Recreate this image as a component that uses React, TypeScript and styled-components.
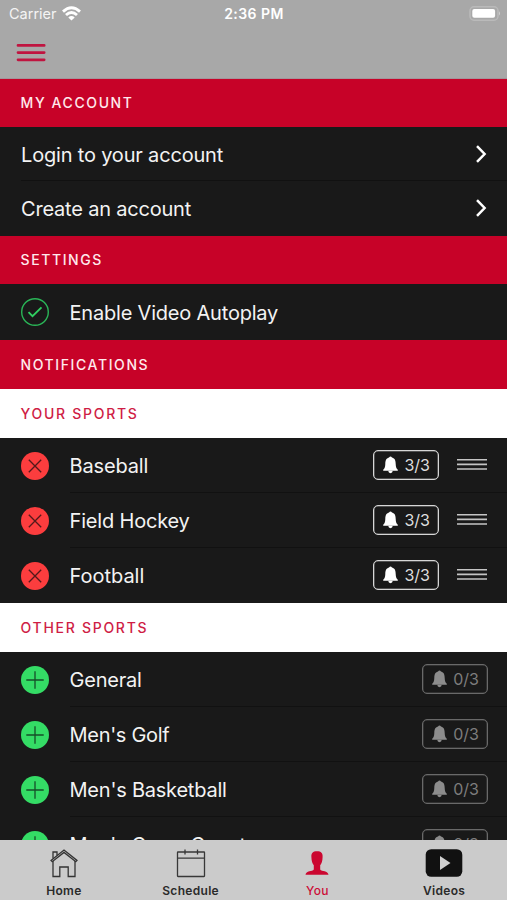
import React from "react";
import styled, { createGlobalStyle } from "styled-components";

const Global = createGlobalStyle`
  * { box-sizing: border-box; }
  body { margin: 0; background: #191919; font-family: Inter, "Liberation Sans", sans-serif; }
`;

const Screen = styled.div`
  display: flex;
  flex-direction: column;
  width: 507px;
  height: 900px;
  overflow: hidden;
  background: #191919;
`;

const Header = styled.header`
  flex: none;
  height: 79px;
  background: #a8a8a8;
  border-bottom: 1px solid #a3949a;
`;

const StatusBar = styled.div`
  display: grid;
  grid-template-columns: 1fr auto 1fr;
  align-items: center;
  height: 27px;
  padding: 0 6px 0 9px;
  color: #fff;
`;

const Carrier = styled.div`
  display: flex;
  align-items: center;
  gap: 5px;
  font-size: 14.5px;
  letter-spacing: 0;
  color: #f4f4f4;
`;

const Clock = styled.div`
  margin-right: 2px;
  font-size: 14px;
  font-weight: 600;
  letter-spacing: 0.45px;
`;

const BatterySlot = styled.div`
  display: flex;
  justify-content: flex-end;
`;

const NavBar = styled.div`
  display: flex;
  align-items: center;
  height: 51px;
  padding-left: 16px;
`;

const Content = styled.main`
  flex: 1;
  min-height: 0;
  overflow: hidden;
`;

const SectionTitle = styled.h2<{ $light?: boolean; $height?: number }>`
  display: flex;
  align-items: center;
  height: ${(p) => p.$height ?? 49}px;
  margin: 0;
  padding: 0 20.5px;
  background: ${(p) => (p.$light ? "#fff" : "#c70228")};
  color: ${(p) => (p.$light ? "#cf1d45" : "#ffe9ec")};
  font-size: 14px;
  font-weight: 500;
  letter-spacing: ${(p) => (p.$light ? 1.72 : 1.6)}px;
`;

const Row = styled.div<{ $height?: number }>`
  display: flex;
  align-items: center;
  height: ${(p) => p.$height ?? 55}px;
  padding-left: 21px;
`;

const RowBody = styled.div<{ $line?: boolean; $drop?: number }>`
  display: flex;
  flex: 1;
  align-items: center;
  justify-content: space-between;
  height: 100%;
  padding: ${(p) => p.$drop ?? 0}px 19px 0 0;
  border-bottom: 1px solid ${(p) => (p.$line ? "#111" : "transparent")};
`;

const Label = styled.span<{ $spacing?: number }>`
  padding-top: 2px;
  color: #f3f3f3;
  font-size: 20px;
  letter-spacing: ${(p) => p.$spacing ?? 0}px;
  white-space: nowrap;
`;

const Marker = styled.div`
  display: flex;
  width: 48.5px;
`;

const Actions = styled.div`
  display: flex;
  align-items: center;
  gap: 18px;
  margin-right: 1px;
`;

const AlertButton = styled.div<{ $off?: boolean }>`
  display: flex;
  align-items: center;
  justify-content: space-between;
  width: 66px;
  height: 30px;
  padding: 0 8px 0 8.5px;
  border: 1px solid ${(p) => (p.$off ? "#696969" : "#d6d6d6")};
  box-shadow: inset 0 0 0 0.5px ${(p) => (p.$off ? "#4a4a4a" : "#888")};
  border-radius: 5px;
  color: ${(p) => (p.$off ? "#7d7d7d" : "#dedede")};
  font-size: 16px;
`;

const TabBar = styled.nav`
  display: grid;
  grid-template-columns: repeat(4, 1fr);
  flex: none;
  height: 60px;
  background: #cbcbcb;
`;

const Tab = styled.div<{ $active?: boolean }>`
  display: flex;
  flex-direction: column;
  align-items: center;
  padding: 7px 0 0 1px;
  color: ${(p) => (p.$active ? "#cc0d38" : "#2a2a2a")};
  font-size: 12px;
  font-weight: ${(p) => (p.$active ? 500 : 600)};
  letter-spacing: 0.3px;
`;

const TabIcon = styled.div`
  display: flex;
  height: 32px;
  margin-bottom: 5px;
`;

const TabLabel = styled.span`
  line-height: 14px;
`;

const Wifi = () => (
  <svg width="19" height="15" viewBox="0 0 19 15" fill="none" stroke="#fff" strokeWidth="2.9">
    <path d="M1 5.6Q9.5-2 18 5.6" />
    <path d="M4 9Q9.5 4 15 9" />
    <path d="M6.3 11.5Q9.5 8.6 12.7 11.5L9.5 14.6Z" fill="#fff" stroke="none" />
  </svg>
);

const Battery = () => (
  <svg width="32" height="15" viewBox="0 0 32 15">
    <rect x="1" y="0.8" width="28" height="13.4" rx="4" fill="none" stroke="#bababa" strokeWidth="1.5" />
    <rect x="3.3" y="3" width="22.8" height="8.8" rx="2" fill="#fff" />
    <path d="M30 5.2q2 2.2 0 4.4z" fill="#d0d0d0" />
  </svg>
);

const MenuIcon = () => (
  <svg width="30" height="19" viewBox="0 0 30 19" stroke="#c01440" strokeWidth="2.7" strokeLinecap="round">
    <path d="M2 2.4H28.2M2 9.6H28.2M2 16.8H28.2" />
  </svg>
);

const Chevron = () => (
  <svg width="13" height="18" viewBox="0 0 13 18" fill="none" stroke="#fff" strokeWidth="2.5">
    <path d="M2 1.2L9.6 9L2 16.8" />
  </svg>
);

const CheckMark = () => (
  <svg width="28" height="28" viewBox="0 0 28 28" fill="none" stroke="#2ab557">
    <circle cx="14" cy="14" r="13.3" strokeWidth="1.4" />
    <path d="M7.5 14.2L11.5 18.2L20.5 9.4" stroke="#30cf60" strokeWidth="1.9" />
  </svg>
);

const RemoveMark = () => (
  <svg width="28" height="28" viewBox="0 0 28 28">
    <circle cx="14" cy="14" r="14" fill="#fc3d3e" />
    <path d="M7.8 7.8L20.2 20.2M20.2 7.8L7.8 20.2" stroke="#52191b" strokeWidth="1.3" />
  </svg>
);

const AddMark = () => (
  <svg width="28" height="28" viewBox="0 0 28 28">
    <circle cx="14" cy="14" r="14" fill="#34dc65" />
    <path d="M5.3 14H22.7M14 5.3V22.7" stroke="#164e28" strokeWidth="1.3" />
  </svg>
);

const Bell = ({ color }: { color: string }) => (
  <svg width="15" height="18" viewBox="0 0 15 18" fill={color}>
    <path d="M6 1.5Q7.5-.5 9 1.5C12 2.3 12.6 4.8 12.7 8C12.8 11.2 13.3 12.4 14.8 13.8V14.8H.2V13.8C1.7 12.4 2.2 11.2 2.3 8C2.4 4.8 3 2.3 6 1.5Z" />
    <path d="M5.2 14.8H9.8Q9.5 17.2 7.5 17.2Q5.5 17.2 5.2 14.8Z" />
  </svg>
);

const DragHandle = () => (
  <svg width="30" height="14" viewBox="0 0 30 14" stroke="#c5c5c5" strokeWidth="1.6">
    <path d="M0 1.8H30M0 6.4H30M0 11H30" />
  </svg>
);

const HomeIcon = () => (
  <svg width="28" height="32" viewBox="0 0 28 32" fill="none" stroke="#333" strokeWidth="1.3">
    <path d="M3 14V29.5H9.8V20H18.2V29.5H25V14" />
    <path d="M1 13.4L14 3L27 13.4L25.8 14.7L14 5.4L2.2 14.7Z" />
    <path d="M3 11.5V5H7V8.3" />
  </svg>
);

const CalendarIcon = () => (
  <svg width="30" height="32" viewBox="0 0 30 32" fill="none" stroke="#383838" strokeWidth="1.3">
    <rect x="1.5" y="5" width="27" height="24.5" rx="0.5" />
    <path d="M1.5 11.2H28.5M9 2.5V7.5M21.5 2.5V7.5" />
  </svg>
);

const PersonIcon = () => (
  <svg width="24" height="32" viewBox="0 0 24 32" fill="#cb0730">
    <path d="M12 4.3C16.2 4.3 17.9 6.2 17.6 10C17.5 14.3 16.7 16.5 15.2 18.3V22.4C16.6 24.8 23 23.2 23.5 27.7H.5C1 23.2 7.4 24.8 8.8 22.4V18.3C7.3 16.5 6.5 14.3 6.4 10C6.1 6.2 7.8 4.3 12 4.3Z" />
  </svg>
);

const VideoIcon = () => (
  <svg width="38" height="32" viewBox="0 0 38 32">
    <rect x="0.7" y="2.2" width="36.6" height="27.6" rx="5.5" fill="#111" />
    <path d="M15 9L25.5 16L15 23Z" fill="#d0d0d0" />
  </svg>
);

const yourSports = [
  { name: "Baseball", spacing: -0.15 },
  { name: "Field Hockey", spacing: -0.18 },
  { name: "Football", spacing: -0.02 },
];

const otherSports = [
  { name: "General", spacing: -0.2 },
  { name: "Men's Golf", spacing: -0.3 },
  { name: "Men's Basketball", spacing: -0.22 },
  { name: "Men's Cross Country", spacing: -0.28 },
];

const tabs = [
  { name: "Home", icon: <HomeIcon /> },
  { name: "Schedule", icon: <CalendarIcon /> },
  { name: "You", icon: <PersonIcon />, active: true },
  { name: "Videos", icon: <VideoIcon /> },
];

export default function App() {
  return (
    <Screen>
      <Global />
      <Header>
        <StatusBar>
          <Carrier>Carrier <Wifi /></Carrier>
          <Clock>2:36 PM</Clock>
          <BatterySlot><Battery /></BatterySlot>
        </StatusBar>
        <NavBar><MenuIcon /></NavBar>
      </Header>
      <Content>
        <SectionTitle $height={47.5}>MY ACCOUNT</SectionTitle>
        <Row $height={54.5}>
          <RowBody $line $drop={1}><Label $spacing={-0.18}>Login to your account</Label><Chevron /></RowBody>
        </Row>
        <Row $height={54.5}>
          <RowBody><Label $spacing={-0.2}>Create an account</Label><Chevron /></RowBody>
        </Row>
        <SectionTitle $height={48.5}>SETTINGS</SectionTitle>
        <Row $height={56}>
          <Marker><CheckMark /></Marker>
          <RowBody><Label $spacing={-0.2}>Enable Video Autoplay</Label></RowBody>
        </Row>
        <SectionTitle>NOTIFICATIONS</SectionTitle>
        <SectionTitle $light>YOUR SPORTS</SectionTitle>
        {yourSports.map((s, i) => (
          <Row key={s.name}>
            <Marker><RemoveMark /></Marker>
            <RowBody $line={i < yourSports.length - 1}>
              <Label $spacing={s.spacing}>{s.name}</Label>
              <Actions>
                <AlertButton><Bell color="#fff" />3/3</AlertButton>
                <DragHandle />
              </Actions>
            </RowBody>
          </Row>
        ))}
        <SectionTitle $light>OTHER SPORTS</SectionTitle>
        {otherSports.map((s) => (
          <Row key={s.name}>
            <Marker><AddMark /></Marker>
            <RowBody $line>
              <Label $spacing={s.spacing}>{s.name}</Label>
              <AlertButton $off><Bell color="#8c8c8c" />0/3</AlertButton>
            </RowBody>
          </Row>
        ))}
      </Content>
      <TabBar>
        {tabs.map((t) => (
          <Tab key={t.name} $active={t.active}>
            <TabIcon>{t.icon}</TabIcon>
            <TabLabel>{t.name}</TabLabel>
          </Tab>
        ))}
      </TabBar>
    </Screen>
  );
}
